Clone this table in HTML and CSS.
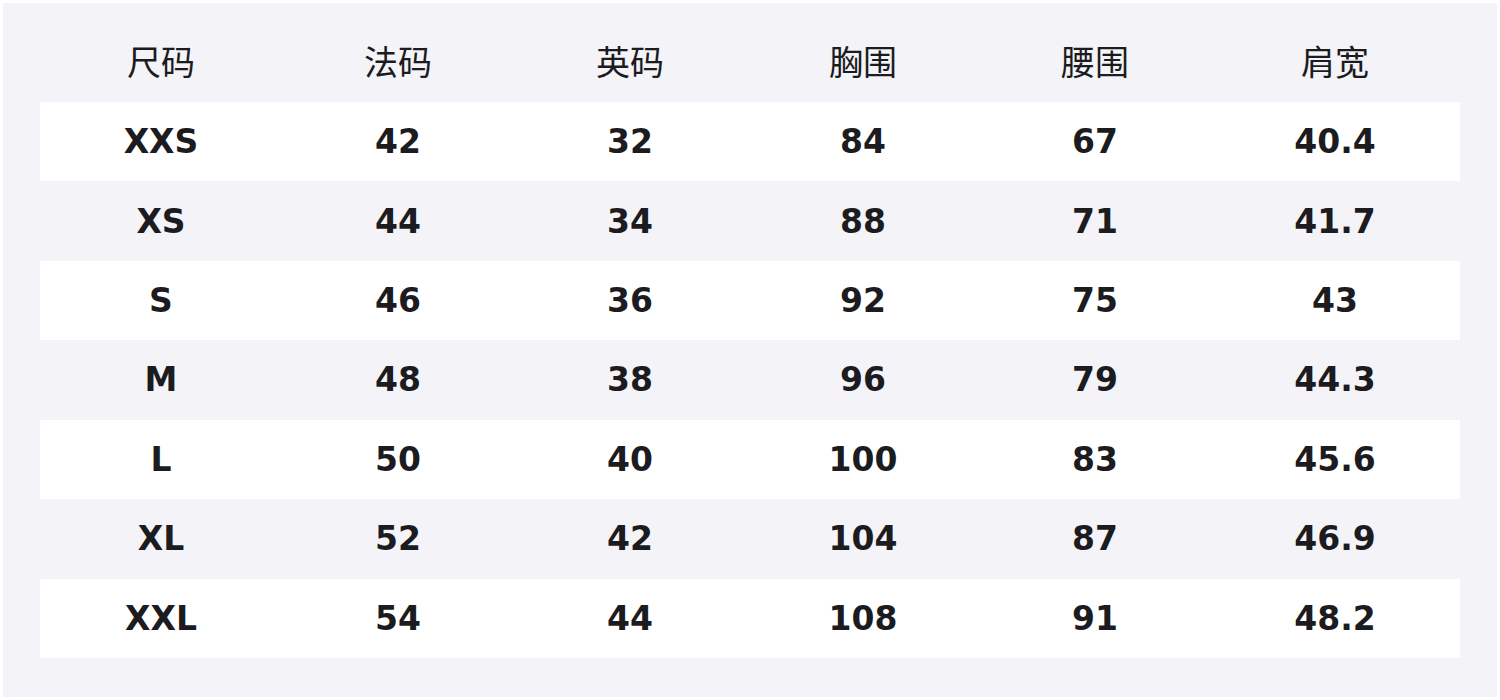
FILE: index.html
```html
<!DOCTYPE html>
<html lang="zh">
<head>
<meta charset="utf-8">
<title>尺码表</title>
<link rel="stylesheet" href="styles.css">
</head>
<body>
<div class="panel">
  <div class="table">
    <div class="row head">
      <div class="cell">尺码</div><div class="cell">法码</div><div class="cell">英码</div><div class="cell">胸围</div><div class="cell">腰围</div><div class="cell">肩宽</div>
    </div>
    <div class="row odd"><div class="cell">XXS</div><div class="cell">42</div><div class="cell">32</div><div class="cell">84</div><div class="cell">67</div><div class="cell">40.4</div></div>
    <div class="row even"><div class="cell">XS</div><div class="cell">44</div><div class="cell">34</div><div class="cell">88</div><div class="cell">71</div><div class="cell">41.7</div></div>
    <div class="row odd"><div class="cell">S</div><div class="cell">46</div><div class="cell">36</div><div class="cell">92</div><div class="cell">75</div><div class="cell">43</div></div>
    <div class="row even"><div class="cell">M</div><div class="cell">48</div><div class="cell">38</div><div class="cell">96</div><div class="cell">79</div><div class="cell">44.3</div></div>
    <div class="row odd"><div class="cell">L</div><div class="cell">50</div><div class="cell">40</div><div class="cell">100</div><div class="cell">83</div><div class="cell">45.6</div></div>
    <div class="row even"><div class="cell">XL</div><div class="cell">52</div><div class="cell">42</div><div class="cell">104</div><div class="cell">87</div><div class="cell">46.9</div></div>
    <div class="row odd"><div class="cell">XXL</div><div class="cell">54</div><div class="cell">44</div><div class="cell">108</div><div class="cell">91</div><div class="cell">48.2</div></div>
  </div>
</div>
</body>
</html>
```

FILE: styles.css
```css
html, body {
  margin: 0;
  padding: 0;
  background: #ffffff;
}
body {
  padding: 3px;
  font-family: "DejaVu Sans", "Noto Sans CJK SC", sans-serif;
  color: #1b1b20;
}
.panel {
  box-sizing: border-box;
  width: 1494px;
  height: 694px;
  background: #f3f3f8;
  padding: 21px 37px 0;
}
.table {
  display: flex;
  flex-direction: column;
}
.row {
  display: grid;
  grid-template-columns: 242px 232px 232px 234px 230px 250px;
  height: 79.43px;
  align-items: center;
}
.row.head {
  height: 78px;
  padding-bottom: 6px;
  box-sizing: border-box;
  font-family: "Noto Sans CJK SC", sans-serif;
  font-size: 34px;
  font-weight: 400;
}
.row.odd {
  background: #ffffff;
}
.row.even {
  background: #f3f3f8;
}
.row.odd, .row.even {
  font-size: 33px;
  font-weight: 700;
}
.cell {
  text-align: center;
}
```
